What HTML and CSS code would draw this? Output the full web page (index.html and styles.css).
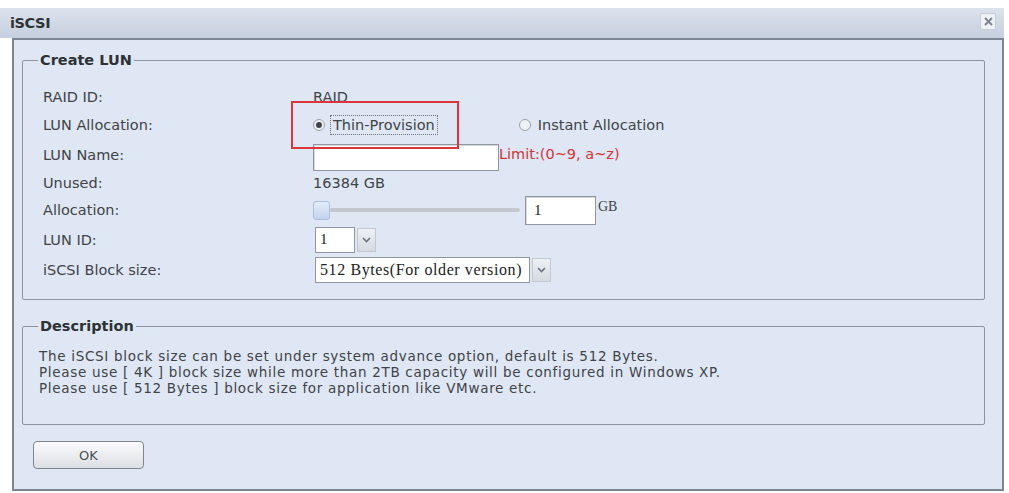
FILE: index.html
```html
<!DOCTYPE html>
<html lang="en">
<head>
    <meta charset="UTF-8">
    <title>iSCSI</title>
    <link rel="stylesheet" href="styles.css">
</head>
<body>
    <div class="window">
        <!-- title bar -->
        <div class="titlebar">
            <span class="title">iSCSI</span>
            <span class="close-btn">
                <svg width="9" height="9" viewBox="0 0 9 9"><path d="M1 1L8 8M8 1L1 8" stroke="#7d8591" stroke-width="2"/></svg>
            </span>
        </div>

        <div class="panel">
            <!-- create LUN -->
            <fieldset class="box create">
                <legend>Create LUN</legend>
                <div class="mark"></div>
                <div class="form">
                    <div class="label">RAID ID:</div>
                    <div class="value">RAID</div>

                    <div class="label">LUN Allocation:</div>
                    <div class="value">
                        <span class="radio checked"></span>
                        <span class="radio-text focus">Thin-Provision</span>
                        <span class="radio second"></span>
                        <span class="radio-text">Instant Allocation</span>
                    </div>

                    <div class="label">LUN Name:</div>
                    <div class="value">
                        <span class="text-input name"></span>
                        <span class="limit">Limit:(0~9, a~z)</span>
                    </div>

                    <div class="label">Unused:</div>
                    <div class="value">16384 GB</div>

                    <div class="label">Allocation:</div>
                    <div class="value">
                        <span class="slider"><span class="handle"></span><span class="track"></span></span>
                        <span class="text-input size">1</span>
                        <span class="unit">GB</span>
                    </div>

                    <div class="label">LUN ID:</div>
                    <div class="value">
                        <span class="select small"><span class="select-text">1</span></span>
                        <span class="arrow-btn"><svg width="9" height="6" viewBox="0 0 9 6"><path d="M1 1L4.5 4.5L8 1" fill="none" stroke="#6b737e" stroke-width="1.6"/></svg></span>
                    </div>

                    <div class="label">iSCSI Block size:</div>
                    <div class="value">
                        <span class="select wide"><span class="select-text">512 Bytes(For older version)</span></span>
                        <span class="arrow-btn"><svg width="9" height="6" viewBox="0 0 9 6"><path d="M1 1L4.5 4.5L8 1" fill="none" stroke="#6b737e" stroke-width="1.6"/></svg></span>
                    </div>
                </div>
            </fieldset>

            <!-- description -->
            <fieldset class="box desc">
                <legend>Description</legend>
                <p>The iSCSI block size can be set under system advance option, default is 512 Bytes.</p>
                <p>Please use [ 4K ] block size while more than 2TB capacity will be configured in Windows XP.</p>
                <p>Please use [ 512 Bytes ] block size for application like VMware etc.</p>
            </fieldset>

            <button class="ok-btn">OK</button>
        </div>
    </div>
</body>
</html>
```

FILE: styles.css
```css
body {
    margin: 0;
    background-color: #ffffff;
    font-family: "DejaVu Sans", Verdana, sans-serif;
    font-size: 14.5px;
    color: #404348;
}
.window {
    padding-top: 8px;
    width: 1004px;
}
.titlebar {
    height: 30px;
    display: flex;
    align-items: center;
    justify-content: space-between;
    padding: 0 8px 0 10px;
    background: linear-gradient(#dce2ec, #c6cfdf);
}
.title {
    font-weight: bold;
    font-size: 14.5px;
    color: #2f3338;
    letter-spacing: -0.4px;
}
.close-btn {
    width: 14px;
    height: 15px;
    display: flex;
    align-items: center;
    justify-content: center;
    background-color: #eef1f6;
    border: 1px solid #c5ccd8;
    border-radius: 2px;
    margin-top: -4px;
}
.panel {
    margin-left: 12px;
    width: 980px;
    height: 449px;
    border: 2px solid #7c8592;
    background-color: #dfe7f4;
    padding: 0 0 0 8px;
}
.box {
    margin: 12px 17px 0 0;
    padding: 0 16px;
    border: 1px solid #8d949d;
    border-radius: 2px;
    position: relative;
}
.box legend {
    padding: 0 2px;
    margin-left: -1px;
    font-weight: bold;
    font-size: 14.5px;
    line-height: 16px;
    color: #2e3236;
}
.create {
    padding-top: 16px;
    padding-bottom: 14px;
}
.form {
    display: grid;
    margin-left: 4px;
    grid-template-columns: 270px 1fr;
    grid-template-rows: 26px 30px 30px 26px 28px 31px 30px;
}
.label, .value {
    display: flex;
    align-items: center;
}
.value {
    white-space: nowrap;
}
.mark {
    position: absolute;
    left: 268px;
    top: 33px;
    width: 164px;
    height: 44px;
    border: 2px solid #d9363a;
}
.radio {
    width: 10px;
    height: 10px;
    border: 1px solid #9ba2ab;
    border-radius: 50%;
    background-color: #eef1f5;
    display: inline-flex;
    align-items: center;
    justify-content: center;
}
.radio.checked::after {
    content: "";
    width: 6px;
    height: 6px;
    border-radius: 50%;
    background-color: #3f444b;
}
.radio.second {
    margin-left: 81px;
}
.radio-text {
    margin-left: 5px;
    padding: 1px 2px;
}
.radio-text.focus {
    border: 1px dotted #6d737b;
}
.text-input {
    display: inline-flex;
    align-items: center;
    background-color: #ffffff;
    border: 1px solid #8f969f;
    box-shadow: inset 1px 1px 0 #d5d9df;
    box-sizing: border-box;
    font-family: "Liberation Serif", "Times New Roman", serif;
    font-size: 15px;
    color: #222;
}
.text-input.name {
    width: 186px;
    height: 27px;
    margin-top: 5px;
}
.limit {
    color: #d4333a;
    font-size: 14.5px;
    align-self: flex-start;
    margin-top: 6px;
}
.slider {
    display: inline-flex;
    align-items: center;
    width: 207px;
}
.handle {
    width: 15px;
    height: 17px;
    border: 1px solid #a8bde0;
    border-radius: 3px;
    background: linear-gradient(#e4ecf9, #c3d3ee);
}
.track {
    flex: 1;
    height: 4px;
    background-color: #c3c8cf;
    border-radius: 2px;
}
.text-input.size {
    width: 71px;
    height: 29px;
    margin-left: 5px;
    padding-left: 8px;
}
.unit {
    margin-left: 2px;
    align-self: flex-start;
    margin-top: 3px;
    font-family: "Liberation Serif", "Times New Roman", serif;
    font-size: 14px;
}
.select {
    display: inline-flex;
    align-items: center;
    height: 26px;
    margin-left: 2px;
    background-color: #ffffff;
    border: 1px solid #8f969f;
    box-sizing: border-box;
    font-family: "Liberation Serif", "Times New Roman", serif;
    font-size: 15px;
    color: #222;
    padding-left: 4px;
}
.select.small {
    width: 40px;
}
.select.wide {
    width: 215px;
    font-size: 16px;
    letter-spacing: 0.6px;
}
.arrow-btn {
    width: 19px;
    height: 24px;
    margin-left: 2px;
    display: inline-flex;
    align-items: center;
    justify-content: center;
    background: linear-gradient(#edf0f4, #d6dbe2);
    border: 1px solid #c2c8d0;
    box-sizing: border-box;
}
.desc {
    margin-top: 18px;
    padding-top: 14px;
    padding-bottom: 28px;
}
.desc p {
    margin: 0;
    line-height: 16px;
    font-size: 13.5px;
    letter-spacing: 0.7px;
}
.ok-btn {
    margin: 16px 0 0 11px;
    width: 111px;
    height: 28px;
    border: 1px solid #7e858e;
    border-radius: 4px;
    background: linear-gradient(#fbfbfc, #dcdfe4);
    font-family: "DejaVu Sans", Verdana, sans-serif;
    font-size: 13px;
    color: #4a4e54;
    cursor: pointer;
}
```
